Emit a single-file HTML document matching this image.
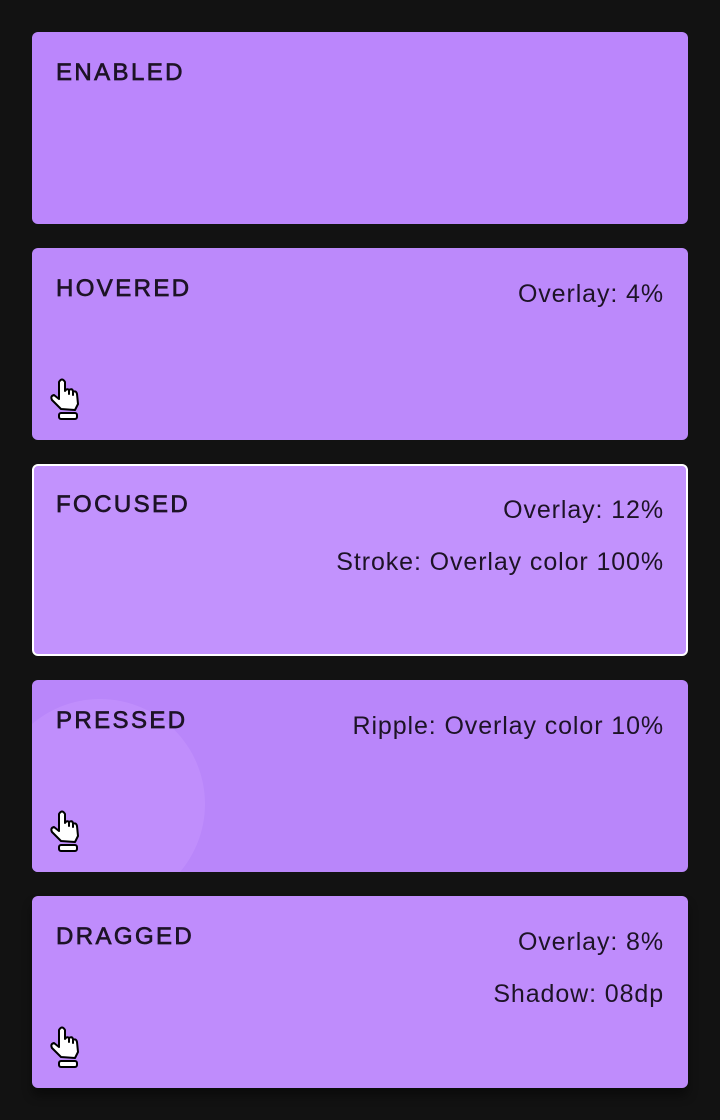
<!DOCTYPE html>
<html><head><meta charset="utf-8"><style>
body{margin:0;background:#121212;width:720px;height:1120px;overflow:hidden;font-family:"Liberation Sans",Roboto,sans-serif;}
.c{position:absolute;left:32px;width:656px;height:192px;border-radius:6px;overflow:hidden;color:#1d1326;box-sizing:border-box}
.l{position:absolute;left:24px;top:27px;font-size:24px;letter-spacing:2.4px;font-weight:normal;-webkit-text-stroke:0.7px #1d1326;}
.r{position:absolute;right:24px;font-size:25px;letter-spacing:0.9px;text-align:right;white-space:nowrap}
svg.h{position:absolute;left:16px;top:128px}
</style></head><body>
<div class="c" style="top:32px;background:#bb86fc"><div class="l">ENABLED</div></div>
<div class="c" style="top:248px;background:#bc89fb"><div class="l">HOVERED</div><div class="r" style="top:32px">Overlay: 4%</div>
<svg class="h" width="40" height="48" viewBox="0 0 40 48"><path d="M13 33 L4 24 Q2 20 6 19 L11 23 L11 6 Q14 1 17 6 L17 15 Q19 12 21 14 L21 18 L21 14 Q24 12 25 15 L25 19 L25 16 Q28 14 29 18 L30 28 L27 34 Z" fill="#fff" stroke="#000" stroke-width="2" stroke-linejoin="round"/><rect x="11" y="37" width="18" height="6" rx="2" fill="#fff" stroke="#000" stroke-width="2"/></svg></div>
<div class="c" style="top:464px;background:#c292fd;border:2px solid #fff"><div class="l" style="left:22px;top:25px">FOCUSED</div><div class="r" style="top:30px;right:22px">Overlay: 12%</div><div class="r" style="top:82px;right:22px">Stroke: Overlay color 100%</div></div>
<div class="c" style="top:680px;background:#b986fa"><div style="position:absolute;left:-37px;top:19px;width:210px;height:210px;border-radius:50%;background:#c08efc"></div><div class="l">PRESSED</div><div class="r" style="top:32px">Ripple: Overlay color 10%</div>
<svg class="h" width="40" height="48" viewBox="0 0 40 48"><path d="M13 33 L4 24 Q2 20 6 19 L11 23 L11 6 Q14 1 17 6 L17 15 Q19 12 21 14 L21 18 L21 14 Q24 12 25 15 L25 19 L25 16 Q28 14 29 18 L30 28 L27 34 Z" fill="#fff" stroke="#000" stroke-width="2" stroke-linejoin="round"/><rect x="11" y="37" width="18" height="6" rx="2" fill="#fff" stroke="#000" stroke-width="2"/></svg></div>
<div class="c" style="top:896px;background:#bf8cfc;box-shadow:0 8px 10px rgba(0,0,0,.4)"><div class="l">DRAGGED</div><div class="r" style="top:32px">Overlay: 8%</div><div class="r" style="top:84px">Shadow: 08dp</div>
<svg class="h" width="40" height="48" viewBox="0 0 40 48"><path d="M13 33 L4 24 Q2 20 6 19 L11 23 L11 6 Q14 1 17 6 L17 15 Q19 12 21 14 L21 18 L21 14 Q24 12 25 15 L25 19 L25 16 Q28 14 29 18 L30 28 L27 34 Z" fill="#fff" stroke="#000" stroke-width="2" stroke-linejoin="round"/><rect x="11" y="37" width="18" height="6" rx="2" fill="#fff" stroke="#000" stroke-width="2"/></svg></div>
</body></html>
